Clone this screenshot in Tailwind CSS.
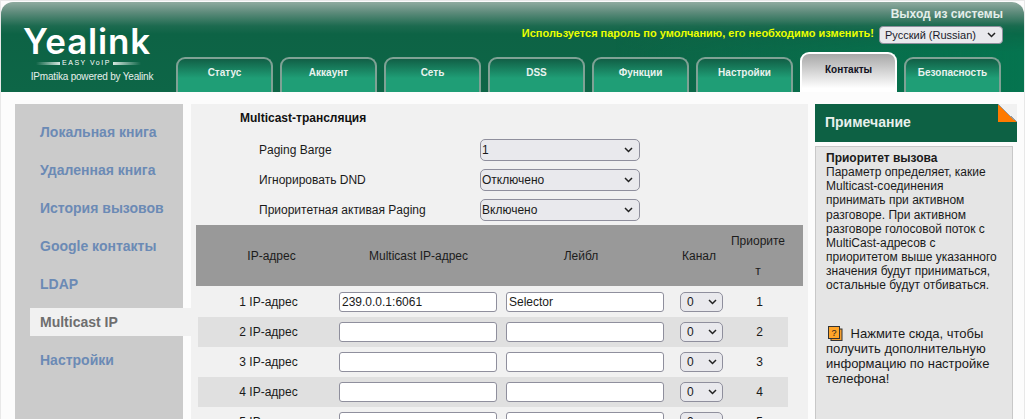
<!DOCTYPE html>
<html lang="ru">
<head>
<meta charset="utf-8">
<title>Yealink</title>
<script src="https://cdn.jsdelivr.net/npm/@tailwindcss/browser@4"></script>
</head>
<body class="bg-white font-['Liberation_Sans',sans-serif] text-[12px] text-[#1a1a1a] overflow-hidden">
<div class="h-[419px] w-[1025px] overflow-hidden border-x border-t border-[#e8e8e8] pt-[1px] bg-[#fcfcfc]">
  <header class="relative h-[90px] w-[1023px] rounded-t-[12px] bg-[linear-gradient(180deg,#8fab9f_0px,#5f8c7c_10px,#1c6a4f_24px,#0d6345_32px,#0d6647_100%)] overflow-hidden">
    <div class="absolute inset-0 bg-[linear-gradient(90deg,transparent_60%,#05744f_100%)] [mask-image:linear-gradient(180deg,transparent_20px,black_50px)]"></div>
    <div class="relative flex h-full">
      <div class="w-[175px] shrink-0 flex flex-col items-center pt-[21px] pr-[3px]">
        <div class="font-['Inter',sans-serif] font-semibold text-[35px] leading-[36px] tracking-[0.8px] text-white">Yealink</div>
        <div class="flex items-center gap-[2px] h-[8px] ml-[3px]">
          <span class="block h-[3px] w-[24px] bg-[linear-gradient(90deg,transparent,#d5e6de)]"></span>
          <span class="text-[7px] leading-[8px] tracking-[1.5px] text-white whitespace-nowrap">EASY VoIP</span>
          <span class="block h-[3px] w-[28px] bg-[linear-gradient(90deg,#d5e6de,transparent)]"></span>
        </div>
        <div class="mt-[4px] ml-[10px] text-[10px] tracking-[-0.2px] leading-[12px] text-[#e6f0ec] whitespace-nowrap">IPmatika powered by Yealink</div>
      </div>
      <div class="flex-1 flex flex-col min-w-0">
        <div class="flex justify-end pr-[21px] pt-[5px] h-[14px] box-content">
          <a class="font-bold text-[12px] leading-[14px] text-[#e4eeea]">Выход из системы</a>
        </div>
        <div class="flex justify-end items-center gap-[5px] pr-[21px] mt-[5px] h-[18px]">
          <span class="mb-[3px] font-bold text-[11px] text-[#eaff00] whitespace-nowrap">Используется пароль по умолчанию, его необходимо изменить!</span>
          <select class="appearance-none h-[18px] w-[124px] bg-[#e9e9ed] bg-[url('data:image/svg+xml,%3Csvg%20xmlns=%27http://www.w3.org/2000/svg%27%20width=%279%27%20height=%276%27%3E%3Cpath%20d=%27M1%201l3.5%203.5L8%201%27%20fill=%27none%27%20stroke=%27%23222%27%20stroke-width=%271.5%27/%3E%3C/svg%3E')] bg-no-repeat bg-[position:right_6px_center] border border-[#8f8f9d] rounded-[4px] text-[11px] text-[#1a1a2a] pl-[5px]"><option>Русский (Russian)</option></select>
        </div>
        <nav class="flex items-end gap-[7px] mt-auto">
          <a class="flex justify-center w-[97px] h-[35px] pt-[6px] rounded-t-[9px] border-2 border-b-0 border-[#7fa295] bg-[linear-gradient(180deg,#115f46,#1f9e76_58%)] font-bold text-[10px] text-[#e8f3ef]">Статус</a>
          <a class="flex justify-center w-[97px] h-[35px] pt-[6px] rounded-t-[9px] border-2 border-b-0 border-[#7fa295] bg-[linear-gradient(180deg,#115f46,#1f9e76_58%)] font-bold text-[10px] text-[#e8f3ef]">Аккаунт</a>
          <a class="flex justify-center w-[97px] h-[35px] pt-[6px] rounded-t-[9px] border-2 border-b-0 border-[#7fa295] bg-[linear-gradient(180deg,#115f46,#1f9e76_58%)] font-bold text-[10px] text-[#e8f3ef]">Сеть</a>
          <a class="flex justify-center w-[97px] h-[35px] pt-[6px] rounded-t-[9px] border-2 border-b-0 border-[#7fa295] bg-[linear-gradient(180deg,#115f46,#1f9e76_58%)] font-bold text-[10px] text-[#e8f3ef]">DSS</a>
          <a class="flex justify-center w-[97px] h-[35px] pt-[6px] rounded-t-[9px] border-2 border-b-0 border-[#7fa295] bg-[linear-gradient(180deg,#115f46,#1f9e76_58%)] font-bold text-[10px] text-[#e8f3ef]">Функции</a>
          <a class="flex justify-center w-[97px] h-[35px] pt-[6px] rounded-t-[9px] border-2 border-b-0 border-[#7fa295] bg-[linear-gradient(180deg,#115f46,#1f9e76_58%)] font-bold text-[10px] text-[#e8f3ef]">Настройки</a>
          <a class="flex justify-center w-[97px] h-[40px] pt-[8px] rounded-t-[9px] border-2 border-b-0 border-white bg-[linear-gradient(180deg,#a8a8a8,#ffffff_90%)] font-bold text-[10px] text-[#111122]">Контакты</a>
          <a class="flex justify-center w-[97px] h-[35px] pt-[6px] rounded-t-[9px] border-2 border-b-0 border-[#7fa295] bg-[linear-gradient(180deg,#115f46,#1f9e76_58%)] font-bold text-[10px] text-[#e8f3ef]">Безопасность</a>
        </nav>
      </div>
    </div>
  </header>

  <main class="flex pt-[12px] pl-[14px]">
    <aside class="w-[168px] h-[400px] shrink-0 bg-[#cbcbcb] pt-[14px] pl-[15px] font-bold text-[14px] leading-[28px] text-[#6b8ab5]">
      <ul class="flex flex-col gap-[10px]">
        <li class="pl-[10px]">Локальная книга</li>
        <li class="pl-[10px]">Удаленная книга</li>
        <li class="pl-[10px]">История вызовов</li>
        <li class="pl-[10px]">Google контакты</li>
        <li class="pl-[10px]">LDAP</li>
        <li class="pl-[10px] w-[161px] bg-[#f1f1f1] text-[#6e6e6e]">Multicast IP</li>
        <li class="pl-[10px]">Настройки</li>
      </ul>
    </aside>

    <section class="ml-[8px] w-[617px] h-[400px] shrink-0 bg-[#f1f1f1]">
      <h2 class="pl-[49px] pt-[7px] font-bold text-[12px] leading-[15px] text-[#111]">Multicast-трансляция</h2>
      <div class="mt-[13px] flex flex-col gap-[8px] pl-[68px]">
        <div class="flex items-center h-[22px]"><label class="w-[221px]">Paging Barge</label><select class="appearance-none w-[160px] h-[22px] bg-[#e9e9ed] bg-[url('data:image/svg+xml,%3Csvg%20xmlns=%27http://www.w3.org/2000/svg%27%20width=%279%27%20height=%276%27%3E%3Cpath%20d=%27M1%201l3.5%203.5L8%201%27%20fill=%27none%27%20stroke=%27%23222%27%20stroke-width=%271.5%27/%3E%3C/svg%3E')] bg-no-repeat bg-[position:right_6px_center] border border-[#8f8f9d] rounded-[5px] text-[12px] pl-[1px]"><option>1</option></select></div>
        <div class="flex items-center h-[22px]"><label class="w-[221px]">Игнорировать DND</label><select class="appearance-none w-[160px] h-[22px] bg-[#e9e9ed] bg-[url('data:image/svg+xml,%3Csvg%20xmlns=%27http://www.w3.org/2000/svg%27%20width=%279%27%20height=%276%27%3E%3Cpath%20d=%27M1%201l3.5%203.5L8%201%27%20fill=%27none%27%20stroke=%27%23222%27%20stroke-width=%271.5%27/%3E%3C/svg%3E')] bg-no-repeat bg-[position:right_6px_center] border border-[#8f8f9d] rounded-[5px] text-[12px] pl-[1px]"><option>Отключено</option></select></div>
        <div class="flex items-center h-[22px]"><label class="w-[221px]">Приоритетная активая Paging</label><select class="appearance-none w-[160px] h-[22px] bg-[#e9e9ed] bg-[url('data:image/svg+xml,%3Csvg%20xmlns=%27http://www.w3.org/2000/svg%27%20width=%279%27%20height=%276%27%3E%3Cpath%20d=%27M1%201l3.5%203.5L8%201%27%20fill=%27none%27%20stroke=%27%23222%27%20stroke-width=%271.5%27/%3E%3C/svg%3E')] bg-no-repeat bg-[position:right_6px_center] border border-[#8f8f9d] rounded-[5px] text-[12px] pl-[1px]"><option>Включено</option></select></div>
      </div>

      <div class="mt-[4px] ml-[5px] w-[607px] h-[61px] bg-[#999999] flex items-center text-[#1c1c1c]">
        <div class="w-[143px] shrink-0 pl-[8px] text-center">IP-адрес</div>
        <div class="w-[159px] shrink-0 text-center">Multicast IP-адрес</div>
        <div class="w-[166px] shrink-0 text-center">Лейбл</div>
        <div class="w-[66px] shrink-0 text-center pl-[4px]">Канал</div>
        <div class="w-[56px] shrink-0 text-center leading-[30px]">Приорите<br>т</div>
      </div>

      <div class="ml-[7px] mt-[1px] w-[590px] flex flex-col">
        <div class="flex items-center h-[30px]">
          <div class="w-[141px] shrink-0 text-center">1 IP-адрес</div>
          <input class="w-[158px] shrink-0 h-[20px] bg-white border border-[#8f8f9d] rounded-[3px] px-[2px]" value="239.0.0.1:6061">
          <input class="ml-[9px] w-[158px] shrink-0 h-[20px] bg-white border border-[#8f8f9d] rounded-[3px] px-[2px]" value="Selector">
          <select class="appearance-none ml-[16px] w-[43px] shrink-0 h-[20px] bg-[#e9e9ed] bg-[url('data:image/svg+xml,%3Csvg%20xmlns=%27http://www.w3.org/2000/svg%27%20width=%279%27%20height=%276%27%3E%3Cpath%20d=%27M1%201l3.5%203.5L8%201%27%20fill=%27none%27%20stroke=%27%23222%27%20stroke-width=%271.5%27/%3E%3C/svg%3E')] bg-no-repeat bg-[position:right_5px_center] border border-[#8f8f9d] rounded-[5px] text-[12px] pl-[6px]"><option>0</option></select>
          <div class="w-[65px] shrink-0 pl-[8px] text-center">1</div>
        </div>
        <div class="flex items-center h-[30px] bg-[#e0e0e0]">
          <div class="w-[141px] shrink-0 text-center">2 IP-адрес</div>
          <input class="w-[158px] shrink-0 h-[20px] bg-white border border-[#8f8f9d] rounded-[3px] px-[2px]">
          <input class="ml-[9px] w-[158px] shrink-0 h-[20px] bg-white border border-[#8f8f9d] rounded-[3px] px-[2px]">
          <select class="appearance-none ml-[16px] w-[43px] shrink-0 h-[20px] bg-[#e9e9ed] bg-[url('data:image/svg+xml,%3Csvg%20xmlns=%27http://www.w3.org/2000/svg%27%20width=%279%27%20height=%276%27%3E%3Cpath%20d=%27M1%201l3.5%203.5L8%201%27%20fill=%27none%27%20stroke=%27%23222%27%20stroke-width=%271.5%27/%3E%3C/svg%3E')] bg-no-repeat bg-[position:right_5px_center] border border-[#8f8f9d] rounded-[5px] text-[12px] pl-[6px]"><option>0</option></select>
          <div class="w-[65px] shrink-0 pl-[8px] text-center">2</div>
        </div>
        <div class="flex items-center h-[30px]">
          <div class="w-[141px] shrink-0 text-center">3 IP-адрес</div>
          <input class="w-[158px] shrink-0 h-[20px] bg-white border border-[#8f8f9d] rounded-[3px] px-[2px]">
          <input class="ml-[9px] w-[158px] shrink-0 h-[20px] bg-white border border-[#8f8f9d] rounded-[3px] px-[2px]">
          <select class="appearance-none ml-[16px] w-[43px] shrink-0 h-[20px] bg-[#e9e9ed] bg-[url('data:image/svg+xml,%3Csvg%20xmlns=%27http://www.w3.org/2000/svg%27%20width=%279%27%20height=%276%27%3E%3Cpath%20d=%27M1%201l3.5%203.5L8%201%27%20fill=%27none%27%20stroke=%27%23222%27%20stroke-width=%271.5%27/%3E%3C/svg%3E')] bg-no-repeat bg-[position:right_5px_center] border border-[#8f8f9d] rounded-[5px] text-[12px] pl-[6px]"><option>0</option></select>
          <div class="w-[65px] shrink-0 pl-[8px] text-center">3</div>
        </div>
        <div class="flex items-center h-[30px] bg-[#e0e0e0]">
          <div class="w-[141px] shrink-0 text-center">4 IP-адрес</div>
          <input class="w-[158px] shrink-0 h-[20px] bg-white border border-[#8f8f9d] rounded-[3px] px-[2px]">
          <input class="ml-[9px] w-[158px] shrink-0 h-[20px] bg-white border border-[#8f8f9d] rounded-[3px] px-[2px]">
          <select class="appearance-none ml-[16px] w-[43px] shrink-0 h-[20px] bg-[#e9e9ed] bg-[url('data:image/svg+xml,%3Csvg%20xmlns=%27http://www.w3.org/2000/svg%27%20width=%279%27%20height=%276%27%3E%3Cpath%20d=%27M1%201l3.5%203.5L8%201%27%20fill=%27none%27%20stroke=%27%23222%27%20stroke-width=%271.5%27/%3E%3C/svg%3E')] bg-no-repeat bg-[position:right_5px_center] border border-[#8f8f9d] rounded-[5px] text-[12px] pl-[6px]"><option>0</option></select>
          <div class="w-[65px] shrink-0 pl-[8px] text-center">4</div>
        </div>
        <div class="flex items-center h-[30px]">
          <div class="w-[141px] shrink-0 text-center">5 IP-адрес</div>
          <input class="w-[158px] shrink-0 h-[20px] bg-white border border-[#8f8f9d] rounded-[3px] px-[2px]">
          <input class="ml-[9px] w-[158px] shrink-0 h-[20px] bg-white border border-[#8f8f9d] rounded-[3px] px-[2px]">
          <select class="appearance-none ml-[16px] w-[43px] shrink-0 h-[20px] bg-[#e9e9ed] bg-[url('data:image/svg+xml,%3Csvg%20xmlns=%27http://www.w3.org/2000/svg%27%20width=%279%27%20height=%276%27%3E%3Cpath%20d=%27M1%201l3.5%203.5L8%201%27%20fill=%27none%27%20stroke=%27%23222%27%20stroke-width=%271.5%27/%3E%3C/svg%3E')] bg-no-repeat bg-[position:right_5px_center] border border-[#8f8f9d] rounded-[5px] text-[12px] pl-[6px]"><option>0</option></select>
          <div class="w-[65px] shrink-0 pl-[8px] text-center">5</div>
        </div>
      </div>
    </section>

    <aside class="ml-[7px] w-[202px] shrink-0">
      <div class="relative h-[38px] bg-[#0d6144] pl-[10px] pb-[2px] flex items-center font-bold text-[14px] text-[#e8f0ed] overflow-hidden">
        Примечание
        <span class="absolute top-0 right-0 w-[19px] h-[18px] bg-[linear-gradient(224deg,#f1f1f1_49%,#999_49%,#999_52%,#ff7a00_52%)]"></span>
      </div>
      <div class="mt-[4px] w-[198px] h-[300px] bg-[#e5e5e5] border border-[#c8c8c8] pl-[10px] pr-[8px] pt-[4px] text-[#1a1a1a]">
        <p class="leading-[14.15px]"><b>Приоритет вызова</b><br>Параметр определяет, какие Multicast-соединения принимать при активном разговоре. При активном разговоре голосовой поток с MultiCast-адресов с приоритетом выше указанного значения будут приниматься, остальные будут отбиваться.</p>
        <p class="mt-[33px] text-[13px] leading-[15px]"><svg class="inline-block align-[-3px] ml-[2px] mr-[4px]" width="15" height="15" viewBox="0 0 15 15"><rect x="3" y="3" width="11" height="11.5" fill="#f5a030" stroke="#333"/><rect x="0.5" y="0.5" width="11" height="12" fill="#ffa428" stroke="#333"/><text x="6" y="10" font-size="9" text-anchor="middle" font-family="Liberation Sans" fill="#222">?</text></svg> Нажмите сюда, чтобы получить дополнительную информацию по настройке телефона!</p>
      </div>
    </aside>
  </main>
</div>
</body>
</html>
